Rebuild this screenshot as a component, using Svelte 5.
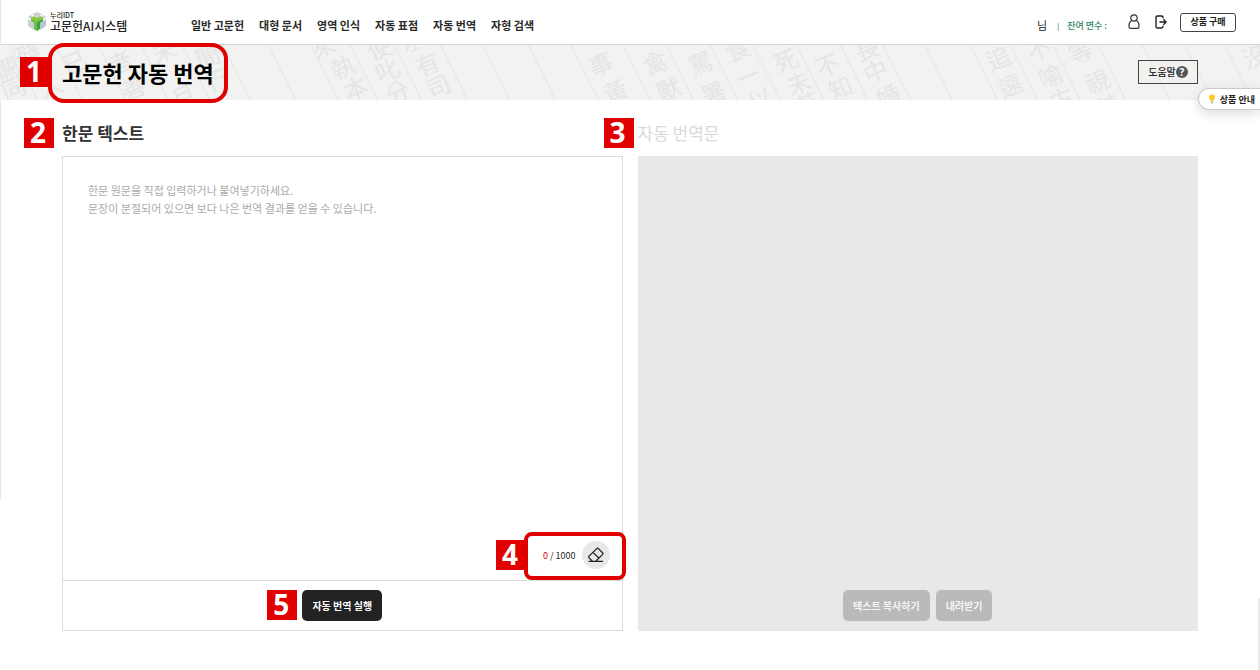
<script>
  const menu = ['일반 고문헌', '대형 문서', '영역 인식', '자동 표점', '자동 번역', '자형 검색'];
  const hint = '한문 원문을 직접 입력하거나 붙여넣기하세요.\n문장이 분절되어 있으면 보다 나은 번역 결과를 얻을 수 있습니다.';
  const limit = 1000;
  let source = $state('');

  // Ruled column lines of the manuscript pattern, by their x at the top edge
  const rules = [-32, 10, 55, 98, 141, 182, 223, 268, 311, 350, 394, 440, 482, 528, 571, 623, 666, 710, 753, 796, 840, 883, 925, 970, 1010, 1053, 1098, 1142, 1185, 1225];
  const glyphs = [
    ['闕', 7, 22], ['同', 13, 42], ['殘', 28, 8], ['已', 74, 16], ['人', 50, 40], ['者', 120, 16], ['善', 133, 42],
    ['未', 163, 5], ['月', 183, 50], ['聞', 207, 10], ['行', 217, 34], ['來', 323, 0], ['執', 342, 21], ['本', 355, 42],
    ['使', 379, 2], ['叱', 387, 24], ['分', 397, 46], ['水', 412, -6], ['有', 427, 18], ['司', 438, 40], ['事', 600, 18],
    ['黃', 615, 45], ['禽', 655, 17], ['獸', 668, 43], ['罵', 700, 17], ['署', 713, 47], ['食', 737, 3], ['一', 748, 30],
    ['以', 760, 53], ['死', 785, 14], ['未', 798, 37], ['英', 807, 58], ['不', 827, 19], ['知', 840, 42], ['長', 866, 3],
    ['中', 875, 25], ['婚', 888, 50], ['追', 998, 12], ['遠', 1010, 39], ['不', 1038, 3], ['喻', 1050, 30], ['古', 1061, 53],
    ['等', 1080, 6], ['視', 1097, 35], ['其', 1108, 60], ['沒', 1254, 10]
  ];
</script>

<div class="page">
  <header>
    <a class="logo" href="#home">
      <svg width="20" height="20" viewBox="0 0 20 20" aria-hidden="true">
        <path d="M5 2 L10 0 15 2 10 6Z" fill="#c9d1d5" />
        <path d="M1 5 L4 3 7 6 7 8 2 6Z" fill="#c9d1d5" />
        <path d="M19 5 L16 3 13 6 13 8 18 6Z" fill="#c9d1d5" />
        <path d="M1 7 L7 11 7 18 1 14Z" fill="#c9d1d5" />
        <path d="M19 7 L13 11 13 18 19 14Z" fill="#bcc7cc" />
        <path d="M4 6 L7 4 10 6 13 4 16 6 16 8 10 12 4 9Z" fill="#8dc63f" />
        <path d="M10 10 L16 7 16 9 13 11 13 17 10 19 7 17 7 11Z" fill="#35a849" />
        <path d="M4 7 L10 10 10 19 7 17 7 11 4 9Z" fill="#72bd43" />
      </svg>
      <span><small>누리IDT</small><b>고문헌AI시스템</b></span>
    </a>
    <nav>
      {#each menu as item}<a href="#menu">{item}</a>{/each}
    </nav>
    <div class="account">
      <span class="user">님</span>
      <span class="bar">|</span>
      <span class="left">잔여 면수 :</span>
      <button class="icon" aria-label="내 정보">
        <svg width="12" height="16" viewBox="0 0 12 16" fill="none" stroke="#333" stroke-width="1.2">
          <circle cx="6" cy="4" r="3.2" />
          <path d="M3.6 6.6C1.8 7.6 1 9.4 1 11.5v1.3c0 1 .6 1.6 1.6 1.6h6.8c1 0 1.6-.6 1.6-1.6v-1.3c0-2.1-.8-3.9-2.6-4.9" />
        </svg>
      </button>
      <button class="icon" aria-label="로그아웃">
        <svg width="12" height="14" viewBox="0 0 12 14" fill="none" stroke="#222" stroke-width="1.4">
          <path d="M8 3.2V2.4C8 1.5 7.5 1 6.6 1H2.4C1.5 1 1 1.5 1 2.4v9.2c0 .9.5 1.4 1.4 1.4h4.2c.9 0 1.4-.5 1.4-1.4v-.8M4.5 7H11M8.4 4.3 11.1 7 8.4 9.7" />
        </svg>
      </button>
      <button class="buy">상품 구매</button>
    </div>
  </header>

  <div class="banner">
    <svg class="pattern" aria-hidden="true">
      {#each rules as x}<line x1={x} y1="0" x2={x + 28} y2="56" />{/each}
      {#each glyphs as [char, x, y]}
        <text {x} {y} transform="rotate(-23 {x} {y})">{char}</text>
      {/each}
    </svg>
    <div class="title">
      <h1>고문헌 자동 번역</h1>
      <span class="mark one">1</span>
      <span class="frame"></span>
    </div>
    <button class="help">도움말<span>?</span></button>
    <a class="guide" href="#guide">
      <svg width="8" height="10" viewBox="0 0 8 10" aria-hidden="true">
        <path d="M4 .5a3 3 0 0 1 3 3C7 5 5.5 5.600 5.500 7h-3C2.500 5.600 1 5 1 3.500a3 3 0 0 1 3-3Z" fill="#ffc928" />
        <path d="M2.800 7.500h2.400v1L4.500 9.500h-1L2.800 8.500Z" fill="#a9b0b5" />
      </svg>
      상품 안내
    </a>
  </div>

  <main>
    <section>
      <h2><label for="source">한문 텍스트</label><span class="mark two">2</span></h2>
      <div class="panel">
        <textarea id="source" maxlength={limit} placeholder={hint} bind:value={source}></textarea>
        <div class="count">
          <span class="number"><em>{source.length}</em> / {limit}</span>
          <button class="erase" aria-label="지우기" onclick={() => (source = '')}>
            <svg width="18" height="16" viewBox="0 0 18 16" fill="none" stroke="#222" stroke-width="1.300" stroke-linejoin="round">
              <path d="M5.200 14 1.800 10.600Q1.200 10 1.800 9.400L9.800 1.600Q10.600.900 11.400 1.600L15.600 5.800Q16.400 6.600 15.600 7.400L9 14M6 5.400 12 11.200M1.500 14.300H16" />
            </svg>
          </button>
          <span class="mark four">4</span>
          <span class="frame"></span>
        </div>
        <footer>
          <div class="action">
            <button class="run">자동 번역 실행</button>
            <span class="mark five">5</span>
          </div>
        </footer>
      </div>
    </section>
    <section>
      <h2 class="off">자동 번역문<span class="mark three">3</span></h2>
      <div class="panel result">
        <output for="source"></output>
        <footer>
          <button disabled>텍스트 복사하기</button>
          <button disabled>내려받기</button>
        </footer>
      </div>
    </section>
  </main>
</div>

<style>
  :global(body) {
    margin: 0;
    background: #fff;
  }
  .page {
    position: relative;
    display: flex;
    flex-direction: column;
    min-height: 100vh;
    box-sizing: border-box;
    overflow-x: hidden;
    color: #222;
    font-family: "Noto Sans CJK KR", sans-serif;
    font-size: 11px;
  }
  .page::before,
  .page::after {
    content: "";
    position: absolute;
    width: 1px;
    background: #e8e8e8;
  }
  .page::before {
    left: 0;
    top: 0;
    height: 500px;
  }
  .page::after {
    right: 0;
    bottom: 0;
    width: 2px;
    height: 72px;
  }
  a {
    color: inherit;
    text-decoration: none;
  }
  button {
    box-sizing: border-box;
    margin: 0;
    padding: 0;
    border: 0;
    background: none;
    color: inherit;
    font: inherit;
  }
  svg {
    display: block;
  }
  header {
    display: flex;
    align-items: center;
    box-sizing: border-box;
    height: 45px;
    padding: 0 24px 0 27px;
    border-bottom: 1px solid #d6d6d6;
  }
  .logo {
    display: flex;
    align-items: center;
    gap: 3px;
    width: 164px;
  }
  .logo span {
    display: flex;
    flex-direction: column;
    white-space: nowrap;
  }
  .logo small {
    font-size: 7px;
    font-weight: 500;
    line-height: 8px;
  }
  .logo b {
    font-size: 12px;
    font-weight: 500;
    line-height: 14px;
  }
  nav {
    display: flex;
    gap: 15px;
    padding-top: 6px;
    color: #2a2a2a;
    font-weight: 700;
    line-height: 16px;
    white-space: nowrap;
  }
  .account {
    display: flex;
    align-items: center;
    margin-left: auto;
    line-height: 16px;
    white-space: nowrap;
  }
  .user {
    padding-top: 6px;
  }
  .bar,
  .left {
    padding-top: 8px;
    color: #2e8560;
    font-size: 9px;
    font-weight: 500;
  }
  .bar {
    margin: 0 8px 0 10px;
    font-size: 7px;
  }
  .icon {
    margin-right: 15px;
  }
  .left {
    margin-right: 21px;
  }
  .buy {
    width: 56px;
    height: 19px;
    margin-left: -2px;
    border: 1px solid #444;
    border-radius: 3px;
    font-size: 9px;
    font-weight: 700;
  }
  .banner {
    position: relative;
    display: flex;
    align-items: center;
    justify-content: space-between;
    box-sizing: border-box;
    height: 55px;
    padding: 0 62px 2px;
    background: #f2f2f1;
  }
  .pattern {
    position: absolute;
    inset: 0;
    width: 100%;
    height: 100%;
  }
  .pattern line {
    stroke: #e9e9e8;
    stroke-width: 1.400;
  }
  .pattern text {
    fill: #e5e5e4;
    font-size: 24px;
    font-weight: 400;
    text-anchor: middle;
    dominant-baseline: central;
  }
  .title {
    position: relative;
  }
  h1 {
    margin: 0;
    color: #000;
    font-size: 22px;
    font-weight: 700;
    line-height: 30px;
  }
  .mark {
    position: absolute;
    box-sizing: border-box;
    width: 30px;
    height: 30px;
    padding-right: 2px;
    background: #e00000;
    color: #fff;
    font: 700 28px/29px "Open Sans", sans-serif;
    text-align: center;
  }
  .frame {
    position: absolute;
    z-index: 1;
    box-sizing: border-box;
    border: 4px solid #e00000;
    pointer-events: none;
  }
  .title .frame {
    inset: -14px -14px -16px;
    border-radius: 16px;
  }
  .one {
    left: -42px;
    top: 0;
  }
  .help {
    position: relative;
    display: flex;
    align-items: center;
    justify-content: center;
    width: 60px;
    height: 24px;
    border: 1px solid #444;
    font-size: 10px;
    font-weight: 500;
  }
  .help span {
    width: 12px;
    height: 12px;
    border-radius: 50%;
    background: #555;
    color: #fff;
    font: 700 10px/12px "Noto Sans", sans-serif;
  }
  .guide {
    position: absolute;
    right: 0;
    top: 43px;
    display: flex;
    align-items: center;
    gap: 4px;
    box-sizing: border-box;
    height: 22px;
    padding: 0 5px 0 9px;
    border: 1px solid #ccc;
    border-right: 0;
    border-radius: 11px 0 0 11px;
    background: #fff;
    box-shadow: 0 4px 12px #0002;
    font-size: 9px;
    font-weight: 700;
  }
  main {
    flex: 1;
    display: grid;
    grid-template-columns: 1fr 1fr;
    gap: 15px;
    padding: 18px 62px 39px;
  }
  section {
    display: flex;
    flex-direction: column;
    min-width: 0;
  }
  h2 {
    position: relative;
    margin: 0 0 8px;
    color: #333;
    font-size: 17px;
    font-weight: 700;
    line-height: 30px;
  }
  .off {
    color: #d9d9d9;
    font-weight: 400;
  }
  .two {
    left: -38px;
    top: 0;
  }
  .three {
    left: -34px;
    top: 0;
  }
  .panel {
    flex: 1;
    display: flex;
    flex-direction: column;
    border: 1px solid #dcdcdc;
  }
  textarea {
    flex: 1;
    padding: 24px 25px;
    border: 0;
    outline: 0;
    resize: none;
    background: none;
    color: #222;
    font: inherit;
    line-height: 18px;
  }
  textarea::placeholder {
    color: #aaa;
    opacity: 1;
  }
  .count {
    position: relative;
    align-self: flex-end;
    display: flex;
    align-items: center;
    gap: 6px;
    margin: 0 12px 11px 0;
    font-size: 9px;
  }
  .count .frame {
    inset: -9px -16px -11px -19px;
    border-radius: 8px;
  }
  em {
    color: #e00000;
    font-style: normal;
  }
  .erase {
    display: grid;
    place-items: center;
    width: 28px;
    height: 28px;
    border-radius: 50%;
    background: #e8e8e8;
  }
  .four {
    left: -47px;
    top: -1px;
  }
  footer {
    display: flex;
    align-items: center;
    justify-content: center;
    gap: 6px;
    height: 49px;
    border-top: 1px solid #dcdcdc;
  }
  .action {
    position: relative;
  }
  .five {
    left: -35px;
    top: 0;
  }
  footer button {
    display: block;
    height: 31px;
    padding: 0 10px;
    border-radius: 5px;
    background: #bababa;
    color: #f5f5f5;
    font-size: 10px;
    font-weight: 700;
  }
  footer .run {
    background: #222;
    color: #fff;
  }
  .result {
    border-color: #e8e8e8;
    background: #e8e8e8;
  }
  .result output {
    flex: 1;
  }
  .result footer {
    border-color: #e8e8e8;
  }
</style>
